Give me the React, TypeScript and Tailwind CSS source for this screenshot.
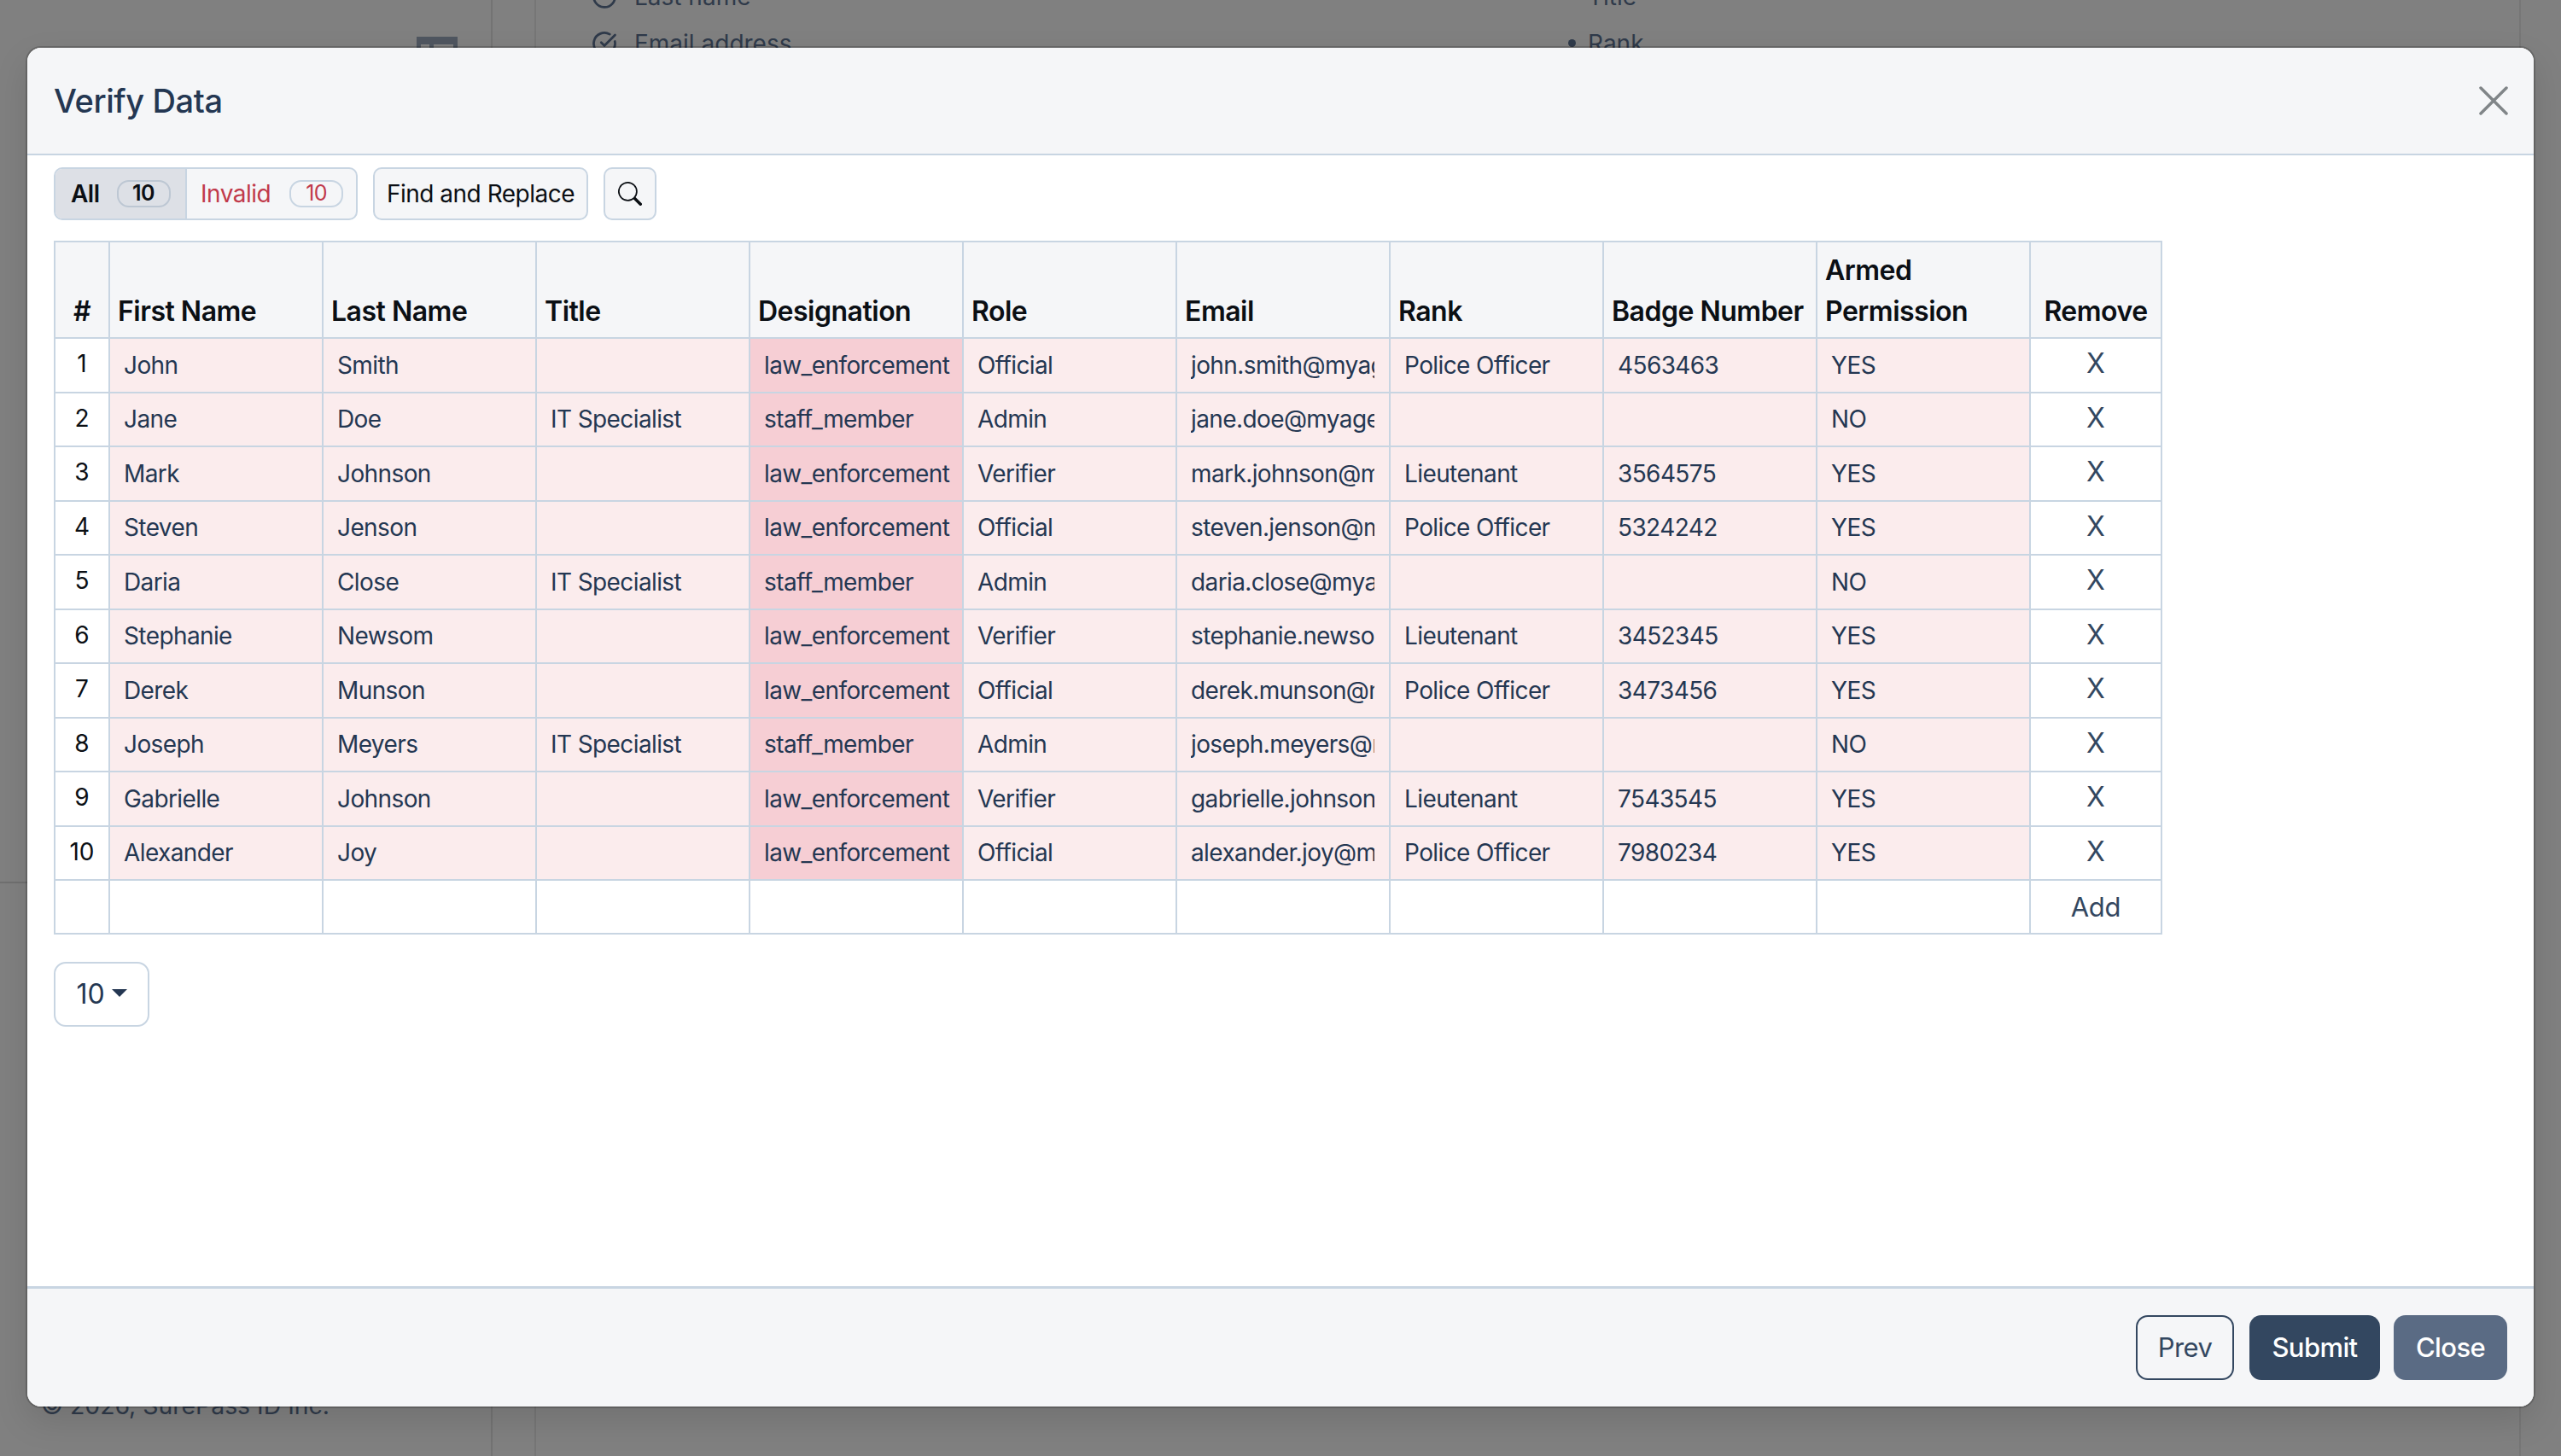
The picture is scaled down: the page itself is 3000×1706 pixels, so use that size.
import { CircleCheckBig } from "lucide-react";
import { BsSearch } from "react-icons/bs";

const rows = [
  { first: "John", last: "Smith", title: "", designation: "law_enforcement", role: "Official", email: "john.smith@myagency.com", rank: "Police Officer", badge: "4563463", armed: "YES" },
  { first: "Jane", last: "Doe", title: "IT Specialist", designation: "staff_member", role: "Admin", email: "jane.doe@myagency.com", rank: "", badge: "", armed: "NO" },
  { first: "Mark", last: "Johnson", title: "", designation: "law_enforcement", role: "Verifier", email: "mark.johnson@myagency.com", rank: "Lieutenant", badge: "3564575", armed: "YES" },
  { first: "Steven", last: "Jenson", title: "", designation: "law_enforcement", role: "Official", email: "steven.jenson@myagency.com", rank: "Police Officer", badge: "5324242", armed: "YES" },
  { first: "Daria", last: "Close", title: "IT Specialist", designation: "staff_member", role: "Admin", email: "daria.close@myagency.com", rank: "", badge: "", armed: "NO" },
  { first: "Stephanie", last: "Newsom", title: "", designation: "law_enforcement", role: "Verifier", email: "stephanie.newsom@myagency.com", rank: "Lieutenant", badge: "3452345", armed: "YES" },
  { first: "Derek", last: "Munson", title: "", designation: "law_enforcement", role: "Official", email: "derek.munson@myagency.com", rank: "Police Officer", badge: "3473456", armed: "YES" },
  { first: "Joseph", last: "Meyers", title: "IT Specialist", designation: "staff_member", role: "Admin", email: "joseph.meyers@myagency.com", rank: "", badge: "", armed: "NO" },
  { first: "Gabrielle", last: "Johnson", title: "", designation: "law_enforcement", role: "Verifier", email: "gabrielle.johnson@myagency.com", rank: "Lieutenant", badge: "7543545", armed: "YES" },
  { first: "Alexander", last: "Joy", title: "", designation: "law_enforcement", role: "Official", email: "alexander.joy@myagency.com", rank: "Police Officer", badge: "7980234", armed: "YES" },
];

const headers = ["#", "First Name", "Last Name", "Title", "Designation", "Role", "Email", "Rank", "Badge Number", "Armed Permission", "Remove"];

function Cell({ value, strong }: { value: string; strong?: boolean }) {
  return (
    <td className={`border-2 border-[#c8d5e2] pl-[16px] ${strong ? "bg-[#f6ced4] pr-[10px]" : "bg-[#fbeced] pr-[17px]"}`}>
      <div className="overflow-hidden whitespace-nowrap text-[28px] leading-[40px] tracking-[-0.6px] text-[#243752]">{value}</div>
    </td>
  );
}

function VerifyTable() {
  return (
    <table className="table-fixed border-collapse w-[2468px]">
      <colgroup>
        <col className="w-[64px]" />
        <col className="w-[250px]" />
        <col className="w-[250px]" />
        <col className="w-[250px]" />
        <col className="w-[250px]" />
        <col className="w-[250px]" />
        <col className="w-[250px]" />
        <col className="w-[250px]" />
        <col className="w-[250px]" />
        <col className="w-[250px]" />
        <col className="w-[154px]" />
      </colgroup>
      <thead>
        <tr className="h-[113px]">
          {headers.map((h, i) => (
            <th
              key={h}
              className={`border-2 border-[#c8d5e2] bg-[#f5f6f8] align-bottom pb-[6px] text-[32px] leading-[48px] tracking-[-0.5px] font-semibold text-[#0b0f14] ${
                i === 0 || i === 10 ? "text-center px-0" : "text-left px-[9px]"
              }`}
            >
              {h}
            </th>
          ))}
        </tr>
      </thead>
      <tbody>
        {rows.map((r, i) => (
          <tr key={r.first} className="h-[63.5px]">
            <td className="border-2 border-[#c8d5e2] bg-white pb-[3px] text-center text-[28px] text-[#0b0f14]">{i + 1}</td>
            <Cell value={r.first} />
            <Cell value={r.last} />
            <Cell value={r.title} />
            <Cell value={r.designation} strong />
            <Cell value={r.role} />
            <Cell value={r.email} />
            <Cell value={r.rank} />
            <Cell value={r.badge} />
            <Cell value={r.armed} />
            <td className="border-2 border-[#c8d5e2] bg-white pb-[3px] text-center text-[32px] text-[#334760]">X</td>
          </tr>
        ))}
        <tr className="h-[63px]">
          {headers.slice(0, 10).map((h) => (
            <td key={h} className="border-2 border-[#c8d5e2] bg-white" />
          ))}
          <td className="border-2 border-[#c8d5e2] bg-white pt-[2px] text-center text-[31px] tracking-[-0.3px] text-[#334760]">Add</td>
        </tr>
      </tbody>
    </table>
  );
}

function BackgroundPage() {
  return (
    <div className="flex h-full text-[28px] text-[#2f3a4a]">
      <div className="w-[577px] shrink-0 border-r-2 border-[#737373] flex flex-col">
        <div className="h-[1035px] border-b-2 border-[#707070] flex justify-end pt-[43px] pr-[39px]">
          <svg width="48" height="40" viewBox="0 0 48 40" className="text-[#4f5660]">
            <path d="M0 0h48v40H0z M5 9v26h10V9z M20 9v26h23V9z" fill="currentColor" fillRule="evenodd" />
          </svg>
        </div>
        <div className="flex-1" />
        <div className="pl-[48px] pb-[38px] text-[28.4px] leading-[42px]">© 2026, SurePass ID Inc.</div>
      </div>
      <div className="w-[49px] shrink-0" />
      <div className="flex flex-1 border-x-2 border-[#767676] mr-[47px] pl-[65px]">
        <div className="w-[1146px] -mt-[32px] shrink-0">
          <div className="flex h-[55px] items-center gap-[20px]">
            <CircleCheckBig size={30} strokeWidth={2.2} />
            Last name
          </div>
          <div className="flex h-[55px] items-center gap-[20px]">
            <CircleCheckBig size={30} strokeWidth={2.2} />
            Email address
          </div>
        </div>
        <div className="-mt-[32px] -ml-[2px]">
          <div className="flex h-[55px] items-center gap-[14px]">
            <span className="size-[9px] rounded-full bg-[#2f3a4a]" />
            Title
          </div>
          <div className="flex h-[55px] items-center gap-[14px]">
            <span className="size-[9px] rounded-full bg-[#2f3a4a]" />
            Rank
          </div>
        </div>
      </div>
    </div>
  );
}

export default function App() {
  return (
    <div className="relative h-[1706px] w-[3000px] overflow-hidden bg-[#808080] font-['Inter',sans-serif]">
      <BackgroundPage />
      <div className="absolute left-[32px] top-[56px] flex h-[1592px] w-[2936px] flex-col overflow-hidden rounded-[16px] bg-white shadow-[0_16px_40px_rgba(0,0,0,0.12),0_0_0_2px_rgba(0,0,0,0.18)]">
        <div className="flex h-[126px] shrink-0 items-center justify-between border-b-2 border-[#c8d5e2] bg-[#f5f6f8] pl-[31px] pr-[30px]">
          <h2 className="text-[38px] font-medium tracking-[-0.4px] text-[#243752]">Verify Data</h2>
          <svg width="34" height="34" viewBox="0 0 34 34" className="text-[#808588]">
            <path d="M2 2l30 30M32 2L2 32" stroke="currentColor" strokeWidth="3.5" strokeLinecap="round" />
          </svg>
        </div>
        <div className="flex-1 px-[31px] pt-[14px]">
          <div className="flex gap-[18px] h-[62px] text-[28px] tracking-[-0.5px]">
            <div className="flex w-[356px] overflow-hidden rounded-[10px] border-2 border-[#c8d5e2] bg-[#f5f6f8]">
              <div className="flex w-[154px] items-center gap-[20px] border-r-2 border-[#c8d5e2] bg-[#dde0e6] pl-[18px] font-semibold text-[#0b0f14]">
                All
                <span className="flex h-[32px] w-[63px] items-center justify-center rounded-[14px] border-2 border-[#bdc7d3] text-[25px] font-semibold">10</span>
              </div>
              <div className="flex flex-1 items-center gap-[22px] pl-[16px] text-[#c13a4b]">
                Invalid
                <span className="flex h-[32px] w-[63px] items-center justify-center rounded-[14px] border-2 border-[#c8d5e2] text-[25px]">10</span>
              </div>
            </div>
            <div className="flex w-[252px] items-center justify-center rounded-[10px] border-2 border-[#c8d5e2] bg-[#f5f6f8] text-[#0b0f14]">Find and Replace</div>
            <div className="flex w-[62px] items-center justify-center rounded-[10px] border-2 border-[#c8d5e2] bg-[#f5f6f8]">
              <BsSearch size={28} className="text-[#0b0f14]" />
            </div>
          </div>
          <div className="mt-[24px]">
            <VerifyTable />
          </div>
          <div className="mt-[32px] flex h-[76px] w-[112px] items-center justify-center gap-[8px] rounded-[14px] border-2 border-[#c8d5e2] text-[32px] text-[#243752]">
            10
            <span className="mb-[4px] h-0 w-0 border-x-[9px] border-t-[9px] border-x-transparent border-t-[#243752]" />
          </div>
        </div>
        <div className="flex h-[141px] shrink-0 items-start justify-end border-t-[3px] border-[#c8d5e2] bg-[#f5f6f8] pr-[31px] pt-[31px] text-[31px] tracking-[-0.6px]">
          <div className="flex h-[76px] w-[115px] items-center justify-center rounded-[14px] border-2 border-[#334760] text-[#334760]">Prev</div>
          <div className="ml-[18px] flex h-[76px] w-[153px] items-center justify-center rounded-[14px] bg-[#334760] font-medium text-white">Submit</div>
          <div className="ml-[16px] flex h-[76px] w-[133px] items-center justify-center rounded-[14px] bg-[#5a6b84] font-medium text-white">Close</div>
        </div>
      </div>
    </div>
  );
}
